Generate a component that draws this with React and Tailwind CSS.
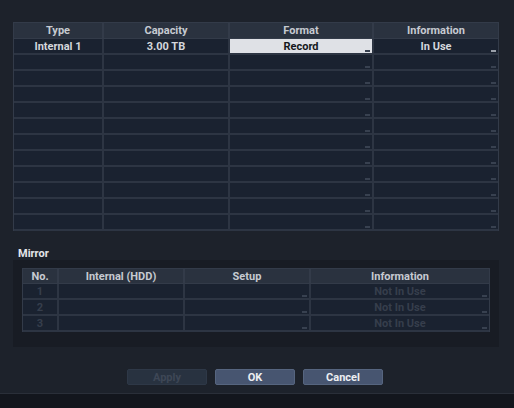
import React from 'react';

const font = { fontFamily: '"Liberation Sans Narrow", "Roboto", sans-serif' };

const diskCols = [
  { key: 'type', label: 'Type', w: 'w-[90px]' },
  { key: 'capacity', label: 'Capacity', w: 'w-[126px]' },
  { key: 'format', label: 'Format', w: 'w-[144px]' },
  { key: 'info', label: 'Information', w: 'flex-1' },
];

const disks = [{ type: 'Internal 1', capacity: '3.00 TB', format: 'Record', info: 'In Use' }];

const mirrorCols = [
  { label: 'No.', w: 'w-[36px]' },
  { label: 'Internal (HDD)', w: 'w-[126px]' },
  { label: 'Setup', w: 'w-[126px]' },
  { label: 'Information', w: 'flex-1' },
];

const Mark = ({ light }) => (
  <span
    className={
      'absolute right-[2px] bottom-[1px] w-[5px] h-[2px] ' +
      (light ? 'bg-[#9aa0aa]' : 'bg-[#384150]')
    }
  />
);

const DiskTable = () => {
  const rows = Array.from({ length: 12 }, (_, i) => disks[i] || null);
  return (
    <div className="border border-[#333b49] border-b-0">
      <div className="flex h-[16px] bg-[#2a323f] border-b border-[#333b49]">
        {diskCols.map((c, i) => (
          <div
            key={c.key}
            className={`${c.w} flex items-center justify-center text-[#c6cad1] ${i < 3 ? 'border-r-2 border-[#333b49]' : ''}`}
          >
            {c.label}
          </div>
        ))}
      </div>
      {rows.map((r, idx) => (
        <div key={idx} className="flex h-[16px] bg-[#1a2230] border-b-2 border-[#2d3543]">
          <div className="w-[90px] flex items-center justify-center text-[#d4d7dc] border-r-2 border-[#2d3543]">
            {r ? r.type : ''}
          </div>
          <div className="w-[126px] flex items-center justify-center text-[#d4d7dc] border-r-2 border-[#2d3543]">
            {r ? r.capacity : ''}
          </div>
          <div
            className={`w-[144px] relative flex items-center justify-center border-r-2 border-[#2d3543] ${r ? 'bg-[#dfe1e6] text-[#15181d]' : ''}`}
          >
            {r ? r.format : ''}
            <Mark light={false} />
          </div>
          <div className="flex-1 relative flex items-center justify-center text-[#d4d7dc]">
            {r ? r.info : ''}
            <Mark light={!!r} />
          </div>
        </div>
      ))}
    </div>
  );
};

const MirrorTable = () => (
  <div className="border border-[#333b49] border-b-0">
    <div className="flex h-[15px] bg-[#2a323f] border-b border-[#333b49]">
      {mirrorCols.map((c, i) => (
        <div
          key={c.label}
          className={`${c.w} flex items-center justify-center text-[#c6cad1] ${i < 3 ? 'border-r-2 border-[#333b49]' : ''}`}
        >
          {c.label}
        </div>
      ))}
    </div>
    {[1, 2, 3].map((n) => (
      <div key={n} className="flex h-[16px] bg-[#1a2230] border-b-2 border-[#2d3543]">
        <div className="w-[36px] flex items-center justify-center text-[#363e4c] border-r-2 border-[#2d3543]">
          {n}
        </div>
        <div className="w-[126px] border-r-2 border-[#2d3543]" />
        <div className="w-[126px] relative border-r-2 border-[#2d3543]">
          <Mark />
        </div>
        <div className="flex-1 relative flex items-center justify-center text-[#363e4c]">
          Not In Use
          <Mark />
        </div>
      </div>
    ))}
  </div>
);

export default function App() {
  return (
    <div
      className="w-[514px] h-[408px] bg-[#1d222b] flex flex-col text-[11px] font-bold leading-none overflow-hidden"
      style={font}
    >
      <div className="pt-[22px] pl-[13px] pr-[15px]">
        <DiskTable />
      </div>

      <div className="pl-[18px] pt-[17px] h-[29px] text-[#e4e6ea] text-[11px]">Mirror</div>

      <div className="ml-[13px] mr-[15px] bg-[#181c24] pt-[8px] pb-[15px] px-[9px]">
        <MirrorTable />
      </div>

      <div className="flex justify-center gap-[8px] pt-[22px] pr-[4px]">
        <button className="w-[80px] h-[16px] rounded-[2px] bg-[#283240] border border-[#2e3847] text-[#3e4756]">
          Apply
        </button>
        <button className="w-[80px] h-[16px] rounded-[2px] bg-[#475570] border border-[#56657f] text-[#eceef2]">
          OK
        </button>
        <button className="w-[80px] h-[16px] rounded-[2px] bg-[#475570] border border-[#56657f] text-[#eceef2]">
          Cancel
        </button>
      </div>

      <div className="mt-auto h-[15px] bg-[#13161d] border-t border-[#2a2f39]" />
    </div>
  );
}
